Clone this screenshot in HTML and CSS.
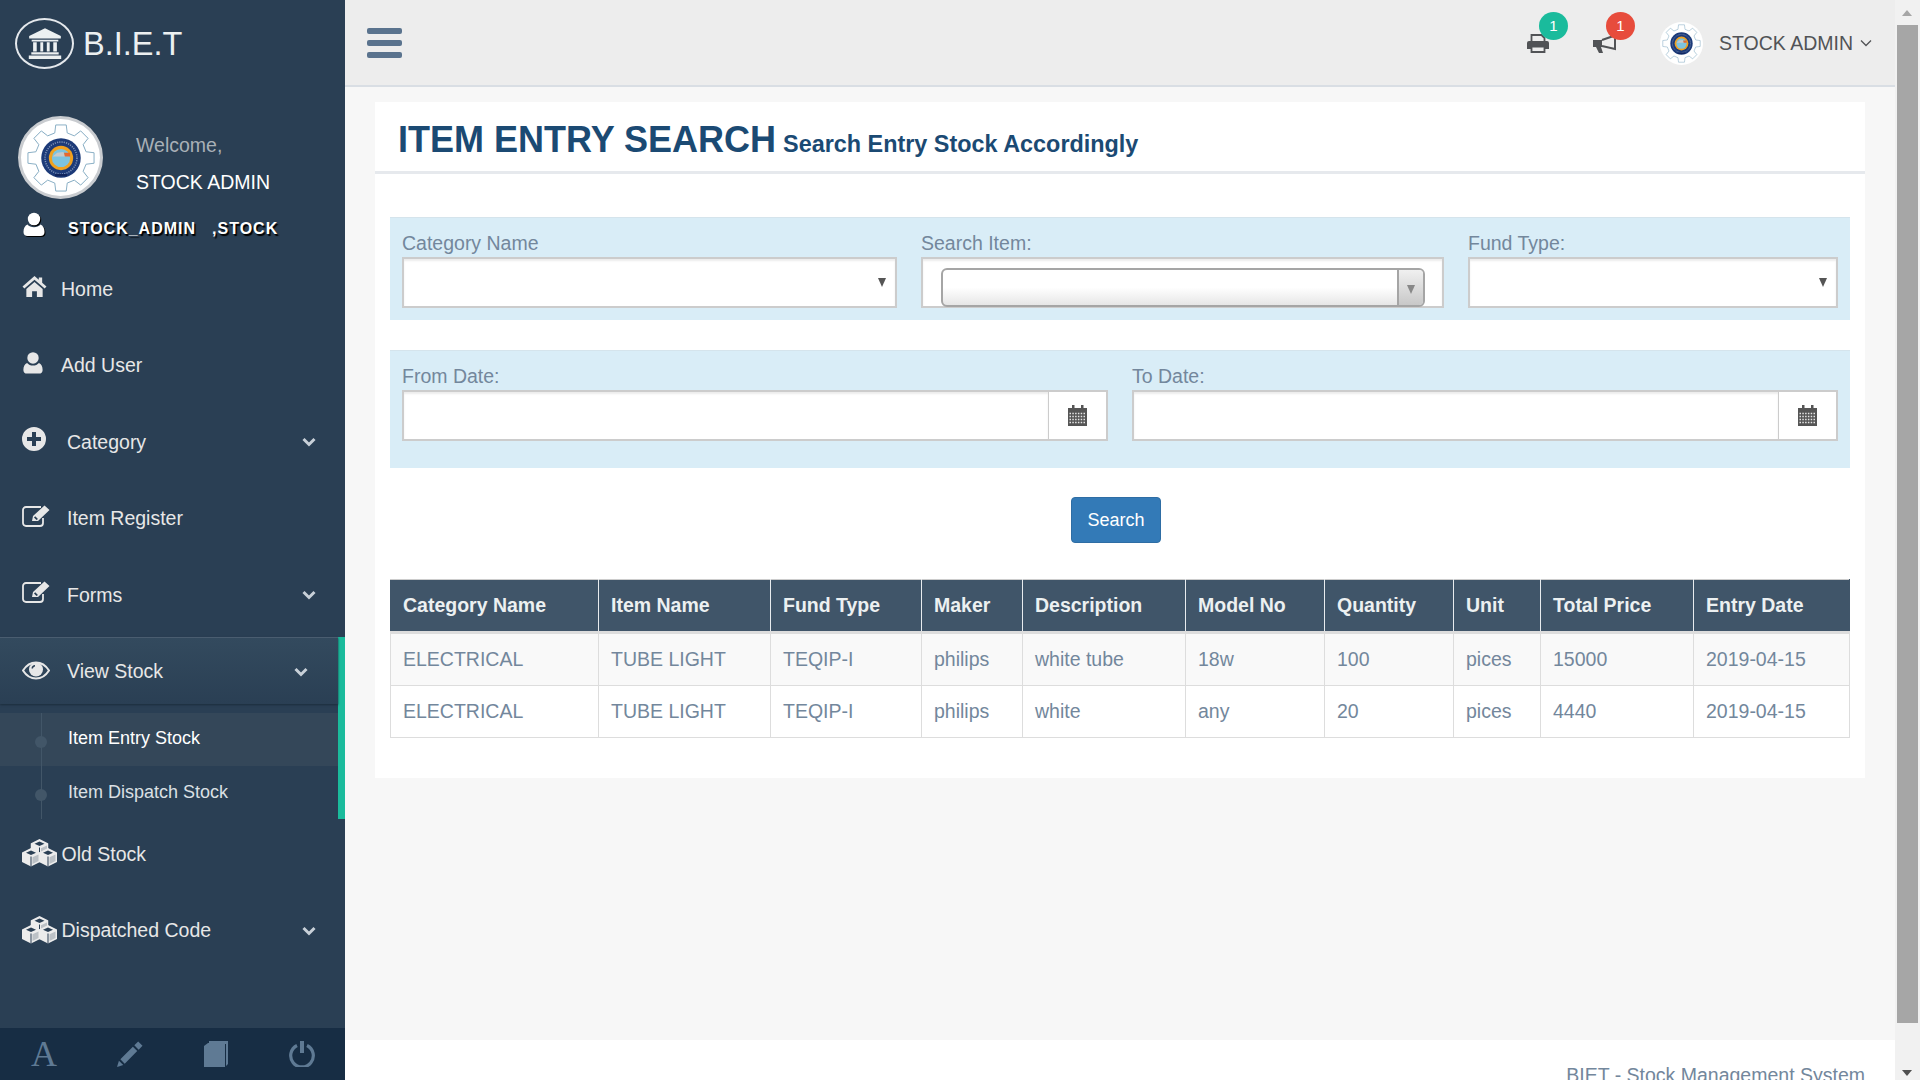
FILE: index.html

```html
<!DOCTYPE html>
<html lang="en">
<head>
  <meta charset="UTF-8">
  <title>Item Entry Search - BIET</title>
  <link rel="stylesheet" href="styles.css">
</head>
<body>
  <svg class="defs" width="0" height="0">
    <symbol id="seal" viewBox="0 0 100 100">
      <g fill="none" stroke="#7fa8c0" stroke-width="1.200">
        <path id="tooth" d="M41.8 17L43.1 6.5H56.9L58.2 17L67.5 20.9"/>
        <use href="#tooth" transform="rotate(45 50 50)"/>
        <use href="#tooth" transform="rotate(90 50 50)"/>
        <use href="#tooth" transform="rotate(135 50 50)"/>
        <use href="#tooth" transform="rotate(180 50 50)"/>
        <use href="#tooth" transform="rotate(225 50 50)"/>
        <use href="#tooth" transform="rotate(270 50 50)"/>
        <use href="#tooth" transform="rotate(315 50 50)"/>
      </g>
      <circle cx="50" cy="50" r="26" fill="#1c3a78"/>
      <circle cx="50" cy="50" r="21" fill="none" stroke="#7f93b8" stroke-width="2" stroke-dasharray="1.5 1.5"/>
      <circle cx="50" cy="50" r="16" fill="#f0a11f"/>
      <circle cx="50" cy="50" r="12" fill="#7cc3e0"/>
      <path d="M39 48l6-5 8-1 3 6H39z" fill="#c9c9c9"/>
      <path d="M54 43h8v5h-7z" fill="#e9672c"/>
      <path d="M42 71h16v3H42z" fill="#10245c"/>
    </symbol>
    <symbol id="i-bank" viewBox="0 0 100 100">
      <path d="M50 6L94 28v7H6v-7z"/>
      <path d="M13 38h74v5H13zM17 45h10v26H17zM37 45h8v26h-8zM55 45h8v26h-8zM73 45h10v26H73zM12 73h76v6H12zM5 82h90v10H5z"/>
    </symbol>
    <symbol id="i-user" viewBox="0 0 24 24">
      <ellipse cx="12" cy="6.5" rx="6.2" ry="6.3"/>
      <path d="M5.5 12C3 13 1.5 15.5 1.5 19.5C1.5 22 3 23.5 5.5 23.5H18.5C21 23.5 22.5 22 22.5 19.5C22.5 15.5 21 13 18.5 12C17 13.8 14.6 14.8 12 14.8C9.4 14.8 7 13.8 5.5 12Z"/>
    </symbol>
    <symbol id="i-home" viewBox="0 0 26 24">
      <path d="M13 1L0.5 12L2.4 14.2L13 5L23.6 14.2L25.5 12L21 8V2.5H17.5V5Z"/>
      <path d="M13 7.2L4.5 14.6V23H10.5V17H15.5V23H21.5V14.6Z"/>
    </symbol>
    <symbol id="i-plus" viewBox="0 0 24 24">
      <path fill-rule="evenodd" d="M12 0a12 12 0 1 0 0 24a12 12 0 1 0 0-24ZM10 5h4v5h5v4h-5v5h-4v-5H5v-4h5Z"/>
    </symbol>
    <symbol id="i-edit" viewBox="0 0 28 22">
      <path d="M21 13v5a3 3 0 0 1-3 3H4a3 3 0 0 1-3-3V5a3 3 0 0 1 3-3h15" fill="none" stroke="currentColor" stroke-width="1.8"/>
      <path d="M10 16L11 11L22.5 0.5L27.5 5L16 16ZM12 12.5L14.5 15L16 14L13.2 11.3Z" fill-rule="evenodd"/>
    </symbol>
    <symbol id="i-eye" viewBox="0 0 28 18">
      <path d="M1 9C4.500 3.500 9 1 14 1S23.500 3.500 27 9C23.500 14.500 19 17 14 17S4.500 14.500 1 9Z" fill="none" stroke="currentColor" stroke-width="2"/>
      <circle cx="14" cy="8" r="7"/>
      <path d="M9.500 7C9.500 5 11 3.500 13 3.500V5C12 5 11 6 11 7Z" fill="#2a3f54"/>
    </symbol>
    <symbol id="i-cube" viewBox="0 0 18 19">
      <path d="M9 0L18 4.500V14L9 18.500L0 14V4.500Z" fill="#ececec"/>
      <path d="M9 2.500L14 4.800L9 7L4 4.800Z" fill="#2a3f54"/>
      <path d="M10.500 9.300L16.500 6.600V13L10.500 16Z" fill="#2a3f54" opacity=".25"/>
      <path d="M9 8.500V18.500" stroke="#2a3f54" stroke-width="1"/>
    </symbol>
    <symbol id="i-cubes" viewBox="0 0 35 28">
      <use href="#i-cube" x="8.500" y="0" width="18" height="19"/>
      <use href="#i-cube" x="0" y="9" width="18" height="19"/>
      <use href="#i-cube" x="17" y="9" width="18" height="19"/>
    </symbol>
    <symbol id="i-chevron" viewBox="0 0 14 10">
      <path d="M1.500 2L7 7.500L12.500 2" fill="none" stroke="currentColor" stroke-width="3"/>
    </symbol>
    <symbol id="i-calendar" viewBox="0 0 19 21">
      <path d="M4 0h2.500v3H13V0h2.500v3H19v18H0V3h4z" fill="#555"/>
      <g stroke="#fff" stroke-width="1.500" stroke-dasharray="1.500 1.300" opacity=".85">
        <path d="M1.500 8.500H18M1.500 11.500H18M1.500 14.500H18M1.500 17.500H18"/>
      </g>
    </symbol>
    <symbol id="i-print" viewBox="0 0 22 19">
      <path d="M4.500 1h10l3 3v4h-13z" fill="none" stroke="#515356" stroke-width="1.800"/>
      <path d="M2 7h18a2 2 0 0 1 2 2v6h-4v-3H4v3H0V9a2 2 0 0 1 2-2z" fill="#515356"/>
      <path d="M4.500 12.500h13V18h-13z" fill="none" stroke="#515356" stroke-width="1.800"/>
    </symbol>
    <symbol id="i-horn" viewBox="0 0 24 20">
      <path d="M0 6h9v7H0zM3 13h5l2 6H6z" fill="#515356"/>
      <path d="M9 6L22 1.500V15L9 12" fill="none" stroke="#515356" stroke-width="2"/>
    </symbol>
    <symbol id="i-pencil" viewBox="0 0 27 27">
      <path d="M0 27L2 20.500L6.500 25ZM3.500 19L16.500 6L21 10.500L8 23.500ZM18 4.500L22 0.500L26.500 5L22.500 9Z"/>
    </symbol>
    <symbol id="i-book" viewBox="0 0 24 26">
      <path d="M5 0H24V23L22 25V3H6.500L5 4.500Z"/>
      <path d="M0 5L4 2V2H21V26H0Z"/>
    </symbol>
    <symbol id="i-power" viewBox="0 0 26 26">
      <path d="M8 4.500A11.300 11.300 0 1 0 18 4.500" fill="none" stroke="currentColor" stroke-width="3.200"/>
      <path d="M11 0h4v12h-4z"/>
    </symbol>
  </svg>

  <aside class="sidebar">
    <div class="brand">
      <span class="brand-mark"><svg class="brand-icon"><use href="#i-bank"/></svg></span>
      <span class="brand-name">B.I.E.T</span>
    </div>
    <div class="profile">
      <span class="profile-pic"><svg class="seal-lg"><use href="#seal"/></svg></span>
      <div class="profile-info">
        <span class="welcome">Welcome,</span>
        <h2>STOCK ADMIN</h2>
      </div>
    </div>
    <div class="user-line">
      <svg class="user-icon"><use href="#i-user"/></svg>
      <span class="user-name">STOCK_ADMIN</span>
      <span class="user-role">,STOCK</span>
    </div>

    <nav class="menu">
      <a class="menu-item"><svg class="ico ico-home"><use href="#i-home"/></svg>Home</a>
      <a class="menu-item"><svg class="ico ico-user"><use href="#i-user"/></svg>Add User</a>
      <a class="menu-item"><svg class="ico ico-plus"><use href="#i-plus"/></svg>Category<svg class="chevron"><use href="#i-chevron"/></svg></a>
      <a class="menu-item"><svg class="ico ico-edit"><use href="#i-edit"/></svg>Item Register</a>
      <a class="menu-item"><svg class="ico ico-edit"><use href="#i-edit"/></svg>Forms<svg class="chevron"><use href="#i-chevron"/></svg></a>
      <div class="menu-active">
        <a class="menu-item active-head"><svg class="ico ico-eye"><use href="#i-eye"/></svg>View Stock<svg class="chevron"><use href="#i-chevron"/></svg></a>
        <ul class="submenu">
          <li class="current">Item Entry Stock</li>
          <li class="next">Item Dispatch Stock</li>
        </ul>
      </div>
      <a class="menu-item cubes"><svg class="ico ico-cubes"><use href="#i-cubes"/></svg>Old Stock</a>
      <a class="menu-item cubes"><svg class="ico ico-cubes"><use href="#i-cubes"/></svg>Dispatched Code<svg class="chevron"><use href="#i-chevron"/></svg></a>
    </nav>

    <div class="sidebar-footer">
      <span class="foot-a">A</span>
      <svg class="foot-ico"><use href="#i-pencil"/></svg>
      <svg class="foot-ico"><use href="#i-book"/></svg>
      <svg class="foot-ico"><use href="#i-power"/></svg>
    </div>
  </aside>

  <div class="main">
    <header class="topbar">
      <div class="hamburger"><span></span><span></span><span></span></div>
      <div class="top-right">
        <div class="notify"><svg class="print-ico"><use href="#i-print"/></svg><span class="badge green">1</span></div>
        <div class="notify"><svg class="horn-ico"><use href="#i-horn"/></svg><span class="badge red">1</span></div>
        <span class="top-avatar"><svg class="seal-sm"><use href="#seal"/></svg></span>
        <span class="top-user">STOCK ADMIN</span>
        <svg class="top-caret" viewBox="0 0 12 8"><path d="M1 1.500L6 6.500L11 1.500" fill="none" stroke="#515356" stroke-width="1.300"/></svg>
      </div>
    </header>

    <section class="content">
      <div class="panel">
        <div class="panel-title">
          <h1>ITEM ENTRY SEARCH <small>Search Entry Stock Accordingly</small></h1>
        </div>
        <div class="panel-body">
          <form class="filter three">
            <div class="field">
              <label>Category Name</label>
              <div class="select-wrap"><select class="control"><option></option></select></div>
            </div>
            <div class="field">
              <label>Search Item:</label>
              <div class="combo-box">
                <div class="combo"><span class="combo-btn"></span></div>
              </div>
            </div>
            <div class="field">
              <label>Fund Type:</label>
              <div class="select-wrap"><select class="control"><option></option></select></div>
            </div>
          </form>

          <form class="filter two">
            <div class="field">
              <label>From Date:</label>
              <div class="date-group">
                <input class="date-input" type="text">
                <span class="date-addon"><svg class="cal"><use href="#i-calendar"/></svg></span>
              </div>
            </div>
            <div class="field">
              <label>To Date:</label>
              <div class="date-group">
                <input class="date-input" type="text">
                <span class="date-addon"><svg class="cal"><use href="#i-calendar"/></svg></span>
              </div>
            </div>
          </form>

          <div class="search-row"><button type="button" class="btn-search">Search</button></div>

          <table class="stock">
            <colgroup>
              <col class="c1"><col class="c2"><col class="c3"><col class="c4"><col class="c5">
              <col class="c6"><col class="c7"><col class="c8"><col class="c9"><col class="c10">
            </colgroup>
            <thead>
              <tr>
                <th>Category Name</th><th>Item Name</th><th>Fund Type</th><th>Maker</th><th>Description</th>
                <th>Model No</th><th>Quantity</th><th>Unit</th><th>Total Price</th><th>Entry Date</th>
              </tr>
            </thead>
            <tbody>
              <tr class="odd">
                <td>ELECTRICAL</td><td>TUBE LIGHT</td><td>TEQIP-I</td><td>philips</td><td>white tube</td>
                <td>18w</td><td>100</td><td>pices</td><td>15000</td><td>2019-04-15</td>
              </tr>
              <tr>
                <td>ELECTRICAL</td><td>TUBE LIGHT</td><td>TEQIP-I</td><td>philips</td><td>white</td>
                <td>any</td><td>20</td><td>pices</td><td>4440</td><td>2019-04-15</td>
              </tr>
            </tbody>
          </table>
        </div>
      </div>
    </section>

    <footer class="page-footer">BIET - Stock Management System</footer>
  </div>

  <div class="scrollbar">
    <span class="arrow-up"></span>
    <div class="thumb"></div>
    <span class="arrow-down"></span>
  </div>
</body>
</html>
```

FILE: styles.css

```css
* {
  box-sizing: border-box;
}
html, body {
  margin: 0;
  height: 1080px;
  overflow: hidden;
}
body {
  display: flex;
  font-family: "Liberation Sans", Arial, sans-serif;
  font-size: 19.5px;
  color: #73879c;
  background: #f7f7f7;
}
.defs {
  position: absolute;
}

/* sidebar */
.sidebar {
  width: 345px;
  height: 1080px;
  flex: none;
  display: flex;
  flex-direction: column;
  background: #2a3f54;
  color: #ecf0f1;
}
.brand {
  height: 116px;
  padding: 18px 0 0 15px;
  display: flex;
  gap: 9px;
}
.brand-mark {
  width: 59px;
  height: 51px;
  border: 2px solid #e4e8ec;
  border-radius: 50%;
  display: flex;
  align-items: center;
  justify-content: center;
}
.brand-icon {
  width: 38px;
  height: 36px;
  fill: #ecf0f1;
}
.brand-name {
  font-size: 32.5px;
  line-height: 52px;
}
.profile {
  display: flex;
  height: 90px;
  padding-left: 18px;
}
.profile-pic {
  width: 85px;
  height: 83px;
  border-radius: 50%;
  background: #fff;
  border: 3px solid #c9ccd0;
  display: flex;
  align-items: center;
  justify-content: center;
}
.seal-lg {
  width: 76px;
  height: 76px;
}
.profile-info {
  padding: 16px 0 0 33px;
}
.welcome {
  display: block;
  line-height: 26px;
  color: #a9b0b7;
}
.profile-info h2 {
  margin: 11px 0 0;
  font-size: 19.5px;
  line-height: 26px;
  font-weight: 400;
  color: #fff;
}
.user-line {
  height: 45px;
  padding: 6px 0 0 22px;
  display: flex;
  align-items: flex-start;
  color: #fff;
  font-size: 16px;
  font-weight: 700;
  letter-spacing: 1px;
  text-shadow: 1.5px 1.5px 1px #000;
}
.user-icon {
  width: 24px;
  height: 25px;
  fill: #fff;
  filter: drop-shadow(1px 1px 0 #000);
}
.user-name {
  margin: 8px 0 0 22px;
}
.user-role {
  margin: 8px 0 0 16px;
}
.menu {
  flex: 1;
}
.menu-item {
  position: relative;
  height: 76.5px;
  display: flex;
  align-items: center;
  padding-left: 22px;
  color: #e7e7e7;
}
.ico {
  fill: #e7e7e7;
  color: #e7e7e7;
  flex: none;
  margin-top: -6px;
}
.ico-home {
  width: 25px;
  height: 23px;
  margin-right: 14px;
}
.ico-user {
  width: 22px;
  height: 24px;
  margin-right: 17px;
}
.ico-plus {
  width: 24px;
  height: 24px;
  margin-right: 21px;
}
.ico-edit {
  width: 28px;
  height: 22px;
  margin-right: 17px;
}
.ico-eye {
  width: 28px;
  height: 19px;
  margin: -2px 17px 0 0;
}
.ico-cubes {
  width: 35px;
  height: 28px;
  margin: -2px 4.500px 0 0;
}
.chevron {
  position: absolute;
  right: 29px;
  top: 50%;
  width: 14px;
  height: 10px;
  margin-top: -5px;
  color: #c8d0d8;
}
.menu-active {
  margin-top: 3px;
  height: 182px;
  border-right: 7px solid #1abb9c;
}
.active-head {
  height: 67px;
  padding-top: 2px;
  border-top: 1px solid #4a5d70;
  background: linear-gradient(#334a5e, #2a3f54);
  box-shadow: 0 1px 2px #1b2c3d;
}
.active-head .chevron {
  right: 30px;
  margin-top: -4px;
}
.active-head .ico {
  margin-top: -2px;
}
.submenu {
  margin: 9px 0 0;
  padding: 0;
  list-style: none;
  position: relative;
  font-size: 18px;
}
.submenu::before {
  content: "";
  position: absolute;
  z-index: 1;
  left: 41px;
  top: 0;
  height: 106px;
  width: 1px;
  background: #425668;
}
.submenu li {
  position: relative;
  height: 53px;
  line-height: 50px;
  padding-left: 68px;
  color: #dbe0e4;
}
.submenu li::before {
  content: "";
  position: absolute;
  left: 35px;
  top: 23px;
  width: 12px;
  height: 12px;
  border-radius: 50%;
  background: #425668;
}
.submenu .current {
  background: #344759;
  color: #fff;
}
.submenu .next {
  line-height: 52px;
}
.cubes {
  top: -2.500px;
}
.sidebar-footer {
  height: 52px;
  flex: none;
  display: flex;
  align-items: center;
  justify-content: space-around;
  padding-left: 1px;
  background: #172d44;
  color: #5f7a94;
  fill: #5f7a94;
}
.foot-a {
  font-family: "Liberation Serif", serif;
  font-size: 36px;
  line-height: 52px;
}
.foot-ico {
  width: 26px;
  height: 26px;
}

/* main column */
.main {
  flex: 1;
  min-width: 0;
  height: 1080px;
  display: flex;
  flex-direction: column;
}
.topbar {
  height: 87px;
  flex: none;
  display: flex;
  align-items: center;
  justify-content: space-between;
  background: #ededed;
  border-bottom: 2px solid #d9dee4;
  padding: 0 23px 0 21.500px;
}
.hamburger {
  width: 35px;
  display: flex;
  flex-direction: column;
  gap: 6px;
}
.hamburger span {
  height: 6px;
  border-radius: 2px;
  background: #5a738e;
}
.top-right {
  display: flex;
  align-items: center;
  color: #515356;
  margin-top: 1px;
}
.notify {
  position: relative;
  width: 66px;
  height: 40px;
}
.print-ico {
  position: absolute;
  left: 1px;
  top: 11px;
  width: 22px;
  height: 19px;
}
.horn-ico {
  position: absolute;
  left: 1px;
  top: 11px;
  width: 24px;
  height: 20px;
}
.badge {
  position: absolute;
  left: 13px;
  top: -11px;
  width: 29px;
  height: 28px;
  border-radius: 50%;
  color: #fff;
  font-size: 15px;
  line-height: 28px;
  text-align: center;
}
.green {
  background: #1abb9c;
}
.red {
  left: 14px;
  background: #e74c3c;
}
.top-avatar {
  width: 43px;
  height: 43px;
  margin: 0 16px 0 2px;
  border-radius: 50%;
  background: #fff;
}
.seal-sm {
  width: 43px;
  height: 43px;
  display: block;
}
.top-caret {
  width: 12px;
  height: 8px;
  margin-left: 7px;
}

/* content */
.content {
  flex: 1;
  padding: 15px 30px 0;
}
.panel {
  background: #fff;
  height: 676px;
}
.panel-title {
  height: 72px;
  padding: 16px 0 0 23px;
  border-bottom: 3px solid #e6e9ed;
}
.panel-title h1 {
  margin: 0;
  font-size: 36px;
  line-height: 44px;
  font-weight: 700;
  color: #1b4a73;
}
.panel-title small {
  margin-left: -3px;
  font-size: 23.4px;
  font-weight: 700;
}
.panel-body {
  padding: 43px 15px 0;
}
.filter {
  display: grid;
  background: #d9edf7;
  border-top: 1px solid #d5e4ec;
  padding: 11px 12px 12px;
}
.three {
  grid-template-columns: 495px 523px 1fr;
  column-gap: 24px;
  margin-bottom: 30px;
}
.two {
  grid-template-columns: 706px 1fr;
  column-gap: 24px;
  padding-bottom: 27px;
}
.field label {
  display: block;
  height: 28px;
  line-height: 28px;
}
.select-wrap {
  position: relative;
}
.select-wrap::after {
  content: "";
  position: absolute;
  right: 11px;
  top: 21px;
  border-top: 9px solid #555;
  border-left: 4px solid transparent;
  border-right: 4px solid transparent;
}
.control {
  display: block;
  width: 100%;
  height: 51px;
  border: 2px solid #ccc;
  border-radius: 0;
  background: #fff;
  appearance: none;
  box-shadow: inset 0 2px 2px rgba(0, 0, 0, 0.075);
}
.combo-box {
  height: 51px;
  border: 2px solid #ccc;
  background: #fff;
  padding: 9px 17px 0 18px;
  box-shadow: inset 0 2px 2px rgba(0, 0, 0, 0.075);
}
.combo {
  height: 39px;
  display: flex;
  justify-content: flex-end;
  border: 2px solid #a5a5a5;
  border-radius: 6px;
  background: linear-gradient(#fff 50%, #e6e6e6);
}
.combo-btn {
  position: relative;
  width: 26px;
  border-left: 2px solid #a5a5a5;
  border-radius: 0 4px 4px 0;
  background: linear-gradient(#f0f0f0, #c8c8c8);
}
.combo-btn::after {
  content: "";
  position: absolute;
  left: 8px;
  top: 15px;
  border-top: 9px solid #888;
  border-left: 4px solid transparent;
  border-right: 4px solid transparent;
}
.date-group {
  display: flex;
  height: 51px;
  border: 2px solid #ccc;
  background: #fff;
}
.date-input {
  flex: 1;
  min-width: 0;
  border: 0;
  outline: 0;
  box-shadow: inset 0 2px 2px rgba(0, 0, 0, 0.075);
}
.date-addon {
  width: 58px;
  flex: none;
  border-left: 1px solid #ccc;
  display: flex;
  align-items: center;
  justify-content: center;
}
.cal {
  width: 19px;
  height: 21px;
}
.search-row {
  display: flex;
  justify-content: center;
  margin: 29px 0 36px;
  padding-right: 8px;
}
.btn-search {
  width: 90px;
  height: 46px;
  border: 1px solid #2e6da4;
  border-radius: 4px;
  background: #337ab7;
  color: #fff;
  font-family: inherit;
  font-size: 18px;
}

/* table */
.stock {
  width: 1459px;
  table-layout: fixed;
  border-collapse: collapse;
}
.c1 { width: 208px; }
.c2 { width: 172px; }
.c3 { width: 151px; }
.c4 { width: 101px; }
.c5 { width: 163px; }
.c6 { width: 139px; }
.c7 { width: 129px; }
.c8 { width: 87px; }
.c9 { width: 153px; }
.c10 { width: 156px; }
.stock th {
  height: 53px;
  padding: 0 12px;
  text-align: left;
  font-weight: 700;
  color: #ecf0f1;
  background: #405569;
  border: 1px solid #e8ebee;
  border-top-color: #ccc;
  border-bottom: 3px solid #ddd;
  border-left-color: #405569;
}
.stock th + th {
  border-left-color: #e8ebee;
}
.stock th:last-child {
  border-right-color: #405569;
}
.stock td {
  height: 52.5px;
  padding: 0 12px;
  border: 1px solid #ddd;
}
.odd td {
  background: #f9f9f9;
}

/* page footer and scrollbar */
.page-footer {
  height: 40px;
  flex: none;
  overflow: hidden;
  background: #fff;
  padding: 23px 30px 0 0;
  text-align: right;
  line-height: 24px;
  font-size: 19.5px;
}
.scrollbar {
  width: 25px;
  height: 1080px;
  flex: none;
  position: relative;
  background: #f1f1f1;
}
.thumb {
  position: absolute;
  left: 2px;
  right: 2px;
  top: 25px;
  height: 998px;
  background: #a6a6a6;
}
.arrow-up, .arrow-down {
  position: absolute;
  left: 7px;
  border-left: 5.500px solid transparent;
  border-right: 5.500px solid transparent;
}
.arrow-up {
  top: 10px;
  border-bottom: 6px solid #a6a6a6;
}
.arrow-down {
  bottom: 4px;
  border-top: 6px solid #505050;
}
```
